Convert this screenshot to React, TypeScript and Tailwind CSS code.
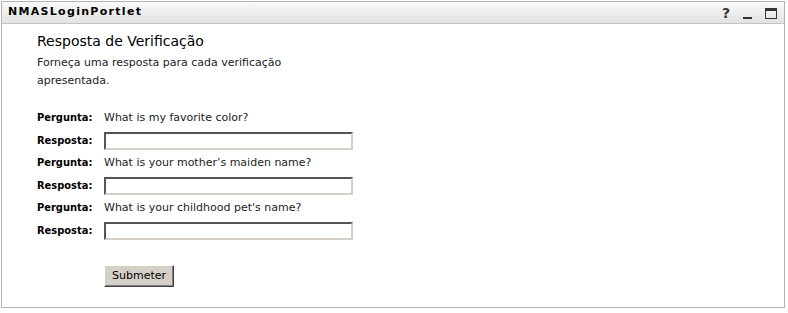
import React from "react";

const font = { fontFamily: '"DejaVu Sans", Verdana, sans-serif' };
const boldFont = { fontFamily: '"DejaVu Sans Condensed", "Liberation Sans", sans-serif' };

function Row({ label, h, children }: { label: string; h: string; children: React.ReactNode }) {
  return (
    <div className={`flex items-center ${h}`}>
      <div className="w-[67px] font-bold text-[11px] text-black" style={boldFont}>{label}</div>
      <div className="text-[11px] text-[#222]">{children}</div>
    </div>
  );
}

function Input() {
  return (
    <input
      type="text"
      className="block w-[249px] h-[18px] bg-white border-2 border-t-[#555] border-l-[#555] border-b-[#d4d0c8] border-r-[#d4d0c8] outline-none"
    />
  );
}

export default function App() {
  const qs = [
    "What is my favorite color?",
    "What is your mother\u2019s maiden name?",
    "What is your childhood pet's name?",
  ];
  return (
    <div className="w-[788px] h-[313px] bg-white pt-[1px] pl-[1px]" style={font}>
      <div className="w-[784px] h-[307px] border border-[#b4b4ae] flex flex-col">
        <div className="h-[22px] border-b border-[#c4c4c4] bg-gradient-to-b from-[#fafafa] to-[#e2e2e2] flex items-center justify-between pl-[6px] pr-[7px]">
          <span className="font-bold text-[11px] tracking-[1.3px] text-black">NMASLoginPortlet</span>
          <div className="flex items-center gap-[13px] pt-[1px]">
            <span className="font-bold text-[14px] leading-none text-[#333]">?</span>
            <span className="block w-[9px] h-[2px] bg-[#333] mt-[9px]"></span>
            <span className="block w-[12px] h-[11px] border border-[#333] border-t-[3px]"></span>
          </div>
        </div>
        <div className="pl-[35px] pt-[9px]">
          <div className="text-[14px] leading-[17px] text-black">Resposta de Verificação</div>
          <div className="w-[262px] text-[11px] leading-[18px] text-[#222] mt-[4px]">
            Forneça uma resposta para cada verificação apresentada.
          </div>
          <div className="mt-[18px]">
            {qs.map((q) => (
              <div key={q}>
                <Row label="Pergunta:" h="h-[21px]">{q}</Row>
                <Row label="Resposta:" h="h-[24px]"><Input /></Row>
              </div>
            ))}
          </div>
          <div className="pl-[67px] mt-[19px]">
            <button className="w-[70px] h-[22px] bg-[#d4d0c8] text-[11px] text-black border border-t-white border-l-white border-b-[#404040] border-r-[#404040] shadow-[inset_-1px_-1px_0_#808080]">
              Submeter
            </button>
          </div>
        </div>
      </div>
    </div>
  );
}
